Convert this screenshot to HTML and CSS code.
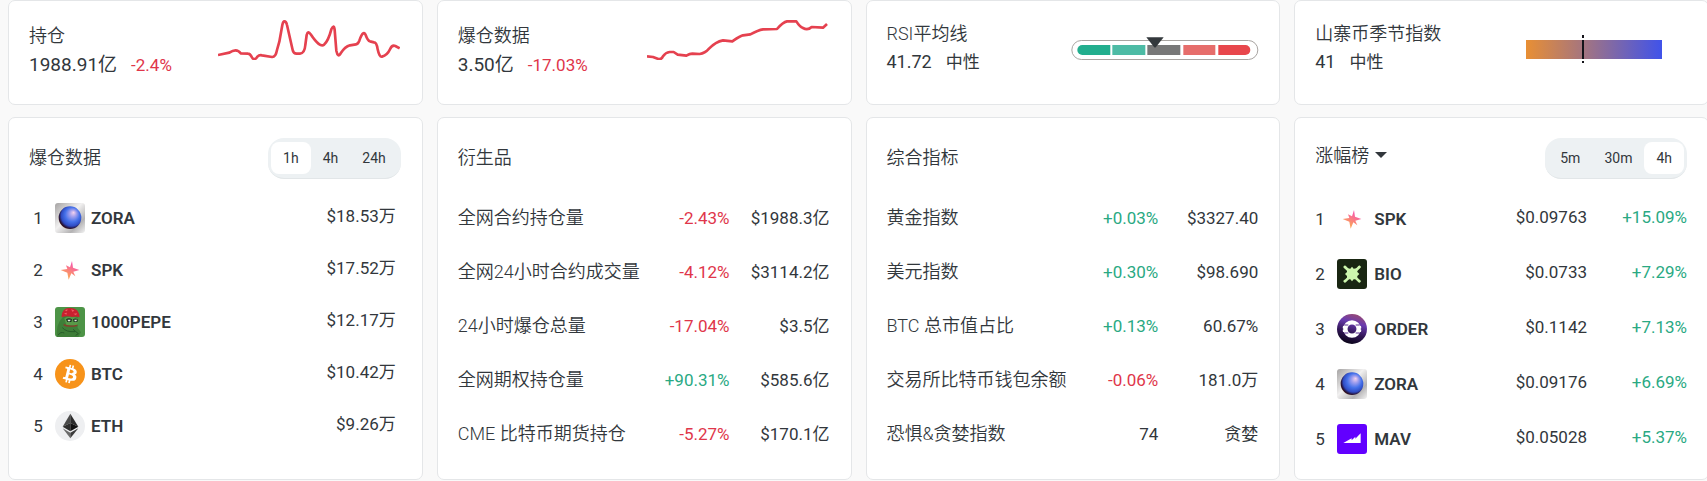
FILE: index.html
```html
<!DOCTYPE html>
<html lang="zh-CN">
<head>
  <meta charset="UTF-8">
  <meta name="viewport" content="width=device-width, initial-scale=1.0">
  <title>市场概览</title>
  <link rel="stylesheet" href="styles.css">
</head>
<body>
  <!-- shared coin icons -->
  <svg class="defs" width="0" height="0" aria-hidden="true">
    <defs>
      <linearGradient id="zoraBg" x1="0" y1="0" x2="1" y2="1">
        <stop offset="0" stop-color="#a5a3a3"/>
        <stop offset="0.45" stop-color="#f1f0f0"/>
        <stop offset="0.75" stop-color="#b4b3b4"/>
        <stop offset="1" stop-color="#f4f4f4"/>
      </linearGradient>
      <radialGradient id="zoraBall" cx="0.56" cy="0.44" r="0.58" fx="0.66" fy="0.27">
        <stop offset="0" stop-color="#f6d3ee"/>
        <stop offset="0.25" stop-color="#a3a0ee"/>
        <stop offset="0.55" stop-color="#4672ea"/>
        <stop offset="0.8" stop-color="#2f4cc4"/>
        <stop offset="0.94" stop-color="#261238"/>
        <stop offset="1" stop-color="#3c1414"/>
      </radialGradient>
      <linearGradient id="spkFill" x1="0.8" y1="0" x2="0.2" y2="1">
        <stop offset="0.2" stop-color="#f85aa6"/>
        <stop offset="0.8" stop-color="#fba25c"/>
      </linearGradient>
      <linearGradient id="orderBg" x1="0.7" y1="0" x2="0.4" y2="1">
        <stop offset="0" stop-color="#9a4a70"/>
        <stop offset="0.3" stop-color="#6a3bb0"/>
        <stop offset="0.65" stop-color="#311655"/>
        <stop offset="1" stop-color="#0a0418"/>
      </linearGradient>
      <linearGradient id="season">
        <stop offset="0" stop-color="#e88f34"/>
        <stop offset="0.42" stop-color="#a5757f"/>
        <stop offset="1" stop-color="#4053ea"/>
      </linearGradient>
      <clipPath id="square"><rect width="90" height="90" rx="9"/></clipPath>
    </defs>
    <symbol id="zora" viewBox="0 0 90 90">
      <rect width="90" height="90" rx="9" fill="url(#zoraBg)"/>
      <circle cx="45" cy="44" r="34" fill="url(#zoraBall)"/>
    </symbol>
    <symbol id="spk" viewBox="0 0 90 90">
      <path fill="url(#spkFill)" d="M51 18 54 38 73 45 55 50 61 64 49 55 41 74 37 53 17 45 37 42 33 31 45 37Z"/>
    </symbol>
  </svg>

  <main class="board">
    <section class="card stat">
      <div class="stat-text shifted">
        <h2>持仓</h2>
        <p><span class="big">1988.91亿</span><span class="down">-2.4%</span></p>
      </div>
      <svg class="spark" viewBox="24 30 546 120" aria-hidden="true">
        <path d="M24 135 58 128Q80 113 92 130L114 131Q120 131 126 142 133 154 142 140 148 134 156 136L186 141Q197 142 201 120L208 95 217 45Q219 34 223 34 229 34 231 45L248 120Q250 131 260 131L270 131Q284 130 286 105L290 75Q294 60 302 73 330 115 342 104 355 93 364 58 372 40 374 60L379 122Q384 145 392 130 405 110 420 106L438 103Q444 102 448 92 460 58 467 75 473 92 480 94L492 97Q500 97 503 118 508 142 516 140 532 136 540 118 546 104 556 108L569 115"/>
      </svg>
    </section>

    <section class="card stat">
      <div class="stat-text shifted">
        <h2>爆仓数据</h2>
        <p><span class="big">3.50亿</span><span class="down">-17.03%</span></p>
      </div>
      <svg class="spark" viewBox="22 30 546 120" aria-hidden="true">
        <path d="M22 139 40 141 56 147Q66 149 70 139 78 127 90 126L102 126 114 134 140 137Q150 131 158 131L180 132Q196 130 208 116 228 95 250 91L278 94Q300 79 310 76L332 73Q356 60 370 58L412 57Q430 36 442 34L470 34Q480 50 490 54 504 62 516 51L550 53 562 42"/>
      </svg>
    </section>

    <section class="card stat">
      <div class="stat-text">
        <h2>RSI平均线</h2>
        <p><span class="mid">41.72</span><span>中性</span></p>
      </div>
      <svg class="gauge" viewBox="35 21 564 72" aria-hidden="true">
        <rect x="37.5" y="31.5" width="558" height="57" rx="28.5" fill="#fff" stroke="#a9a5a2" stroke-width="3"/>
        <path fill="#22ae8e" d="M69 45H153V75H69A15 15 0 0 1 69 45Z"/>
        <path fill="#4dbba5" d="M159 45H258V75H159Z"/>
        <path fill="#787878" d="M264 45H363V75H264Z"/>
        <path fill="#e66d6b" d="M372 45H468V75H372Z"/>
        <path fill="#e8474c" d="M477 45H558A15 15 0 0 1 558 75H477Z"/>
        <path fill="#33383c" d="M261 22H313L290 51Q287 54 284 51Z"/>
      </svg>
    </section>

    <section class="card stat">
      <div class="stat-text">
        <h2>山寨币季节指数</h2>
        <p><span class="mid">41</span><span>中性</span></p>
      </div>
      <svg class="season" viewBox="0 0 136 28" aria-hidden="true">
        <rect y="5" width="136" height="19" fill="url(#season)"/>
        <path d="M57 0V3M57 5V24M57 26V28" stroke="#14141a" stroke-width="2"/>
      </svg>
    </section>

    <section class="card">
      <header>
        <h2>爆仓数据</h2>
        <div class="tabs">
          <button type="button" class="active">1h</button>
          <button type="button">4h</button>
          <button type="button">24h</button>
        </div>
      </header>
      <table class="coins liquidation">
        <tr>
          <td class="rank">1</td>
          <td class="icon"><svg viewBox="0 0 90 90"><use href="#zora"/></svg></td>
          <th scope="row">ZORA</th>
          <td class="value">$18.53万</td>
        </tr>
        <tr>
          <td class="rank">2</td>
          <td class="icon"><svg viewBox="0 0 90 90"><use href="#spk"/></svg></td>
          <th scope="row">SPK</th>
          <td class="value">$17.52万</td>
        </tr>
        <tr>
          <td class="rank">3</td>
          <td class="icon">
            <svg viewBox="0 0 90 90">
              <g clip-path="url(#square)">
                <rect width="90" height="90" fill="#4d9447"/>
                <path fill="#3e7e38" d="M5 90Q3 50 22 32 28 20 46 21 66 20 70 36L68 62 78 76 70 90Z"/>
                <path fill="#589a48" d="M28 34Q40 24 66 32L72 42 66 56 34 54Z"/>
                <path fill="#c9202f" d="M20 25Q23 7 36 4 58 0 68 12 75 24 73 31 62 27 52 30 34 25 20 31Z"/>
                <path fill="#ee5960" d="M29 10 38 7 36 13ZM48 7 58 10 53 15ZM27 19 36 17 34 23ZM55 20 66 19 63 25Z"/>
                <path fill="#1d3520" d="M33 37Q42 30 51 37L49 45H37ZM54 37Q62 31 69 38L67 45H56Z"/>
                <path fill="#e9eee5" d="M38 38H47L45 43H39ZM58 38H66L64 43H59Z"/>
                <path fill="none" stroke="#8c3a2b" stroke-width="4" d="M26 53Q38 61 67 55"/>
                <path fill="none" stroke="#285c2a" stroke-width="3" d="M22 62Q34 76 60 74M54 67 70 80 62 85M10 84Q16 73 28 78"/>
              </g>
            </svg>
          </td>
          <th scope="row">1000PEPE</th>
          <td class="value">$12.17万</td>
        </tr>
        <tr>
          <td class="rank">4</td>
          <td class="icon">
            <svg viewBox="0 0 32 32">
              <circle cx="16" cy="16" r="16" fill="#f7931a"/>
              <path fill="#fff" d="M23.189 14.02c.314-2.096-1.283-3.223-3.465-3.975l.708-2.84-1.728-.43-.69 2.765c-.454-.114-.92-.22-1.385-.326l.695-2.783L15.596 6l-.708 2.839c-.376-.086-.746-.17-1.104-.26l.002-.009-2.384-.595-.46 1.846s1.283.294 1.256.312c.7.175.826.638.805 1.006l-.806 3.235c.048.012.11.03.18.057l-.183-.045-1.13 4.532c-.086.212-.303.531-.793.41.018.025-1.256-.313-1.256-.313l-.858 1.978 2.25.561c.418.105.828.215 1.231.318l-.715 2.872 1.727.43.708-2.84c.472.127.93.245 1.378.357l-.706 2.828 1.728.43.715-2.866c2.948.558 5.164.333 6.097-2.333.752-2.146-.037-3.385-1.588-4.192 1.13-.26 1.98-1.003 2.207-2.538zm-3.95 5.538c-.533 2.147-4.148.986-5.32.695l.95-3.805c1.172.293 4.929.872 4.37 3.11zm.535-5.569c-.487 1.953-3.495.96-4.47.717l.86-3.45c.975.243 4.118.696 3.61 2.733z"/>
            </svg>
          </td>
          <th scope="row">BTC</th>
          <td class="value">$10.42万</td>
        </tr>
        <tr>
          <td class="rank">5</td>
          <td class="icon">
            <svg viewBox="0 0 90 90">
              <circle cx="45" cy="45" r="45" fill="#eeeff1"/>
              <path fill="#4a4a4a" d="M46 8 23 47 46 36Z"/>
              <path fill="#2b2b2b" d="M46 8V36L70 47Z"/>
              <path fill="#2f2f2f" d="M46 36 23 47 46 61Z"/>
              <path fill="#111" d="M46 36 70 47 46 61Z"/>
              <path fill="#6b6b6b" d="M23 52 46 65V82Z"/>
              <path fill="#3a3a3a" d="M70 52 46 65V82Z"/>
            </svg>
          </td>
          <th scope="row">ETH</th>
          <td class="value">$9.26万</td>
        </tr>
      </table>
    </section>

    <section class="card">
      <header><h2>衍生品</h2></header>
      <table class="metrics">
        <tr><th scope="row">全网合约持仓量</th><td class="down">-2.43%</td><td>$1988.3亿</td></tr>
        <tr><th scope="row">全网24小时合约成交量</th><td class="down">-4.12%</td><td>$3114.2亿</td></tr>
        <tr><th scope="row">24小时爆仓总量</th><td class="down">-17.04%</td><td>$3.5亿</td></tr>
        <tr><th scope="row">全网期权持仓量</th><td class="up">+90.31%</td><td>$585.6亿</td></tr>
        <tr><th scope="row">CME 比特币期货持仓</th><td class="down">-5.27%</td><td>$170.1亿</td></tr>
      </table>
    </section>

    <section class="card">
      <header><h2>综合指标</h2></header>
      <table class="metrics">
        <tr><th scope="row">黄金指数</th><td class="up">+0.03%</td><td>$3327.40</td></tr>
        <tr><th scope="row">美元指数</th><td class="up">+0.30%</td><td>$98.690</td></tr>
        <tr><th scope="row">BTC 总市值占比</th><td class="up">+0.13%</td><td>60.67%</td></tr>
        <tr><th scope="row">交易所比特币钱包余额</th><td class="down">-0.06%</td><td>181.0万</td></tr>
        <tr><th scope="row">恐惧&amp;贪婪指数</th><td>74</td><td>贪婪</td></tr>
      </table>
    </section>

    <section class="card">
      <header>
        <div class="picker">
          <select aria-label="榜单"><option>涨幅榜</option></select>
          <span class="caret"></span>
        </div>
        <div class="tabs">
          <button type="button">5m</button>
          <button type="button">30m</button>
          <button type="button" class="active">4h</button>
        </div>
      </header>
      <table class="coins gainers">
        <tr>
          <td class="rank">1</td>
          <td class="icon"><svg viewBox="0 0 90 90"><use href="#spk"/></svg></td>
          <th scope="row">SPK</th>
          <td class="value">$0.09763</td>
          <td class="value up">+15.09%</td>
        </tr>
        <tr>
          <td class="rank">2</td>
          <td class="icon">
            <svg viewBox="0 0 90 90">
              <rect width="90" height="90" rx="9" fill="#192612"/>
              <g fill="#cdf7ae" stroke="#cdf7ae">
                <path fill="none" stroke-width="8" stroke-linecap="round" d="M24 24 67 67M67 24 24 67"/>
                <path stroke="none" d="M45 23 50 29 60 28 61 39 67 45 61 51 60 61 50 61 45 67 40 61 30 61 30 51 24 45 30 39 30 28 40 29Z"/>
                <circle cx="23" cy="24" r="3"/><circle cx="67" cy="24" r="3"/>
                <circle cx="23" cy="66" r="3"/><circle cx="67" cy="66" r="3"/>
              </g>
            </svg>
          </td>
          <th scope="row">BIO</th>
          <td class="value">$0.0733</td>
          <td class="value up">+7.29%</td>
        </tr>
        <tr>
          <td class="rank">3</td>
          <td class="icon">
            <svg viewBox="0 0 90 90">
              <circle cx="45" cy="45" r="45" fill="url(#orderBg)"/>
              <circle cx="45" cy="45" r="20" fill="none" stroke="#fff" stroke-width="13"/>
              <path fill="#fff" d="M18 36H31V43H17ZM59 36H72L73 43H59ZM17 47H31V54H18ZM59 47H73L72 54H59Z"/>
              <path stroke="#5b2d91" stroke-width="3" d="M22 33H34M56 33H68M22 57H34M56 57H68"/>
            </svg>
          </td>
          <th scope="row">ORDER</th>
          <td class="value">$0.1142</td>
          <td class="value up">+7.13%</td>
        </tr>
        <tr>
          <td class="rank">4</td>
          <td class="icon"><svg viewBox="0 0 90 90"><use href="#zora"/></svg></td>
          <th scope="row">ZORA</th>
          <td class="value">$0.09176</td>
          <td class="value up">+6.69%</td>
        </tr>
        <tr>
          <td class="rank">5</td>
          <td class="icon">
            <svg viewBox="0 0 90 90">
              <rect width="90" height="90" rx="9" fill="#6200ff"/>
              <path fill="#fff" d="M19 57 44 43V49L55 38V44L71 28V57Z"/>
            </svg>
          </td>
          <th scope="row">MAV</th>
          <td class="value">$0.05028</td>
          <td class="value up">+5.37%</td>
        </tr>
      </table>
    </section>
  </main>
</body>
</html>
```

FILE: styles.css
```css
* {
  box-sizing: border-box;
}
body {
  margin: 0;
  overflow-x: hidden;
  background-color: #f9f9f9;
  color: #32373c;
  font-family: Roboto, "Noto Sans CJK SC", sans-serif;
  font-size: 17px;
  line-height: 28px;
}
h2, p {
  margin: 0;
  font-size: inherit;
  font-weight: 400;
}
h2 {
  font-size: 18px;
  font-weight: 350;
}
svg {
  display: block;
}
.defs {
  position: absolute;
}
.board {
  display: grid;
  grid-template-columns: repeat(4, minmax(0, 1fr));
  gap: 12px 14px;
  margin-right: -2px;
  padding-left: 8px;
}
.card {
  padding: 20px 21px 13px 20px;
  background-color: white;
  border: 1px solid #e4e6e8;
  border-radius: 7px;
}
.up {
  color: #2aa983;
}
.down {
  color: #e0364a;
}

/* top row */
.stat {
  display: flex;
  justify-content: space-between;
  align-items: flex-start;
  padding: 19px 20px 24px;
}
.stat-text {
  white-space: nowrap;
}
.stat p {
  display: flex;
  gap: 14px;
}
.shifted {
  padding-top: 2px;
}
.shifted p {
  line-height: 30px;
}
.big {
  font-size: 19px;
}
.mid {
  font-size: 18px;
}
.spark {
  width: 182px;
  height: 40px;
  margin-right: 2px;
  fill: none;
  stroke: #e5414f;
  stroke-width: 8;
  stroke-linejoin: round;
}
.gauge {
  width: 188px;
  height: 24px;
  margin-top: 17px;
}
.season {
  width: 136px;
  height: 28px;
  margin: 15px 26px 0 0;
}

/* list cards */
header {
  display: flex;
  justify-content: space-between;
  align-items: center;
  height: 40px;
  margin-bottom: 13px;
}
.tabs {
  display: flex;
  padding: 4px 3px;
  background-color: #edf1f3;
  border-bottom: 1px solid #e2e6e8;
  border-radius: 16px;
}
.tabs button {
  height: 32px;
  padding: 0 12px;
  border: 0;
  border-radius: 8px;
  background: none;
  color: inherit;
  font-family: inherit;
  font-size: 14px;
}
.tabs .active {
  background-color: white;
}
.picker {
  display: flex;
  align-items: center;
  gap: 6px;
  padding-bottom: 6px;
}
.picker select {
  appearance: none;
  padding: 0;
  border: 0;
  background: none;
  color: inherit;
  font-family: inherit;
  font-size: 18px;
  font-weight: 350;
}
.caret {
  border: 6px solid transparent;
  border-top-color: #32373c;
  border-bottom: 0;
}

table {
  width: 100%;
  border-collapse: collapse;
}
td, th {
  padding: 0;
  white-space: nowrap;
}
.liquidation tr {
  height: 52px;
}
.gainers tr {
  height: 55px;
}
.metrics tr {
  height: 54px;
}
.liquidation {
  margin-top: 14px;
}
.coins th {
  font-weight: 600;
  text-align: left;
}
.coins .rank {
  width: 22px;
}
.coins .icon {
  width: 37px;
}
.coins svg {
  width: 30px;
  height: 30px;
}
.coins .value {
  padding-bottom: 4px;
  text-align: right;
}
.liquidation .rank {
  width: 26px;
  padding-right: 8px;
  text-align: center;
}
.liquidation .icon {
  width: 36px;
}
.liquidation .value {
  padding-right: 5px;
}
.gainers .up {
  width: 100px;
}
.metrics th {
  font-size: 18px;
  font-weight: 350;
  text-align: left;
}
.metrics td {
  text-align: right;
}
.metrics td:last-child {
  width: 100px;
}
```
